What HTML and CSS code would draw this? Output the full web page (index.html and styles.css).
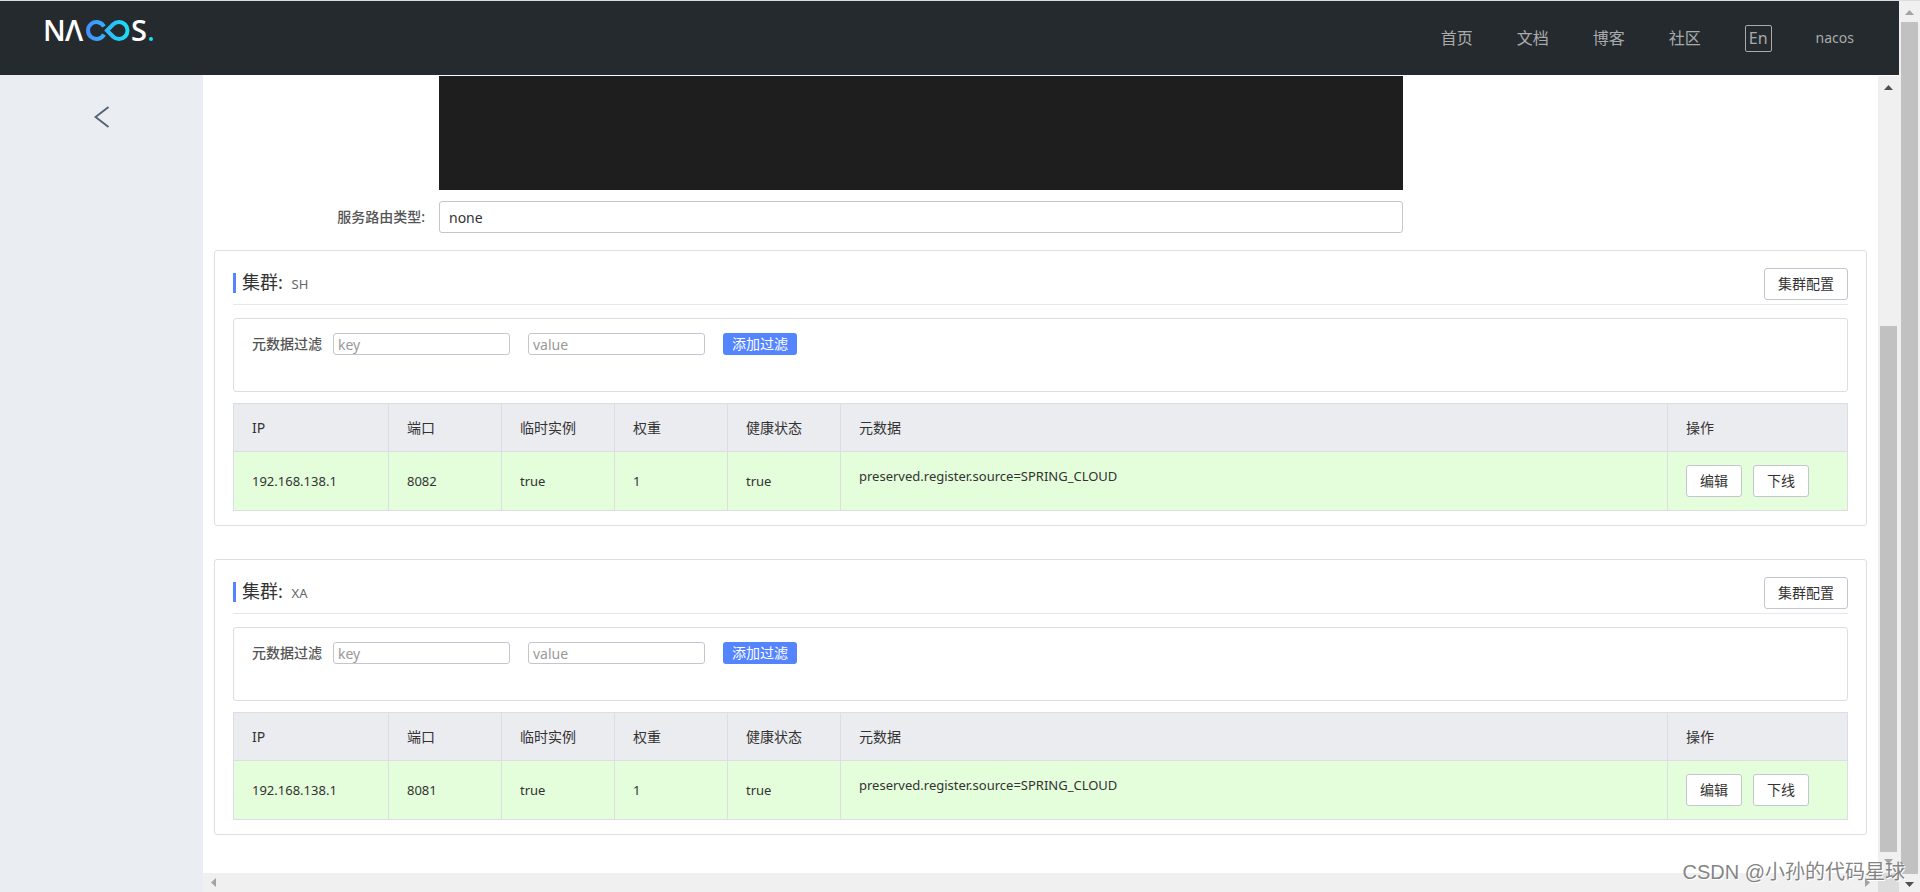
FILE: index.html
```html
<!DOCTYPE html>
<html lang="zh-CN">
<head>
<meta charset="utf-8">
<title>Nacos</title>
<link rel="stylesheet" href="styles.css">
</head>
<body>
<div class="window">
  <div class="app">
    <header class="header">
      <a class="logo" href="#" aria-label="Nacos">
        <svg width="110" height="24" viewBox="0 0 110 24">
          <defs>
            <linearGradient id="loop" gradientUnits="userSpaceOnUse" x1="40" y1="0" x2="86" y2="0">
              <stop offset="0" stop-color="#468cff"/>
              <stop offset="1" stop-color="#17e4f5"/>
            </linearGradient>
          </defs>
          <text class="logo-letter" x="-2" y="22">N</text>
          <text class="logo-letter" x="20" y="22">Λ</text>
          <g fill="none" stroke="url(#loop)" stroke-width="4">
            <path d="M59 7.500A8.500 8.500 0 1 0 59 15.500"/>
            <path d="M62 11.500L68 5.500A8.500 8.500 0 1 1 68 17.500Z"/>
          </g>
          <text class="logo-letter" x="86" y="22">S</text>
          <circle cx="106" cy="20" r="2" fill="#17e4f5"/>
        </svg>
      </a>
      <nav class="nav">
        <a href="#">首页</a>
        <a href="#">文档</a>
        <a href="#">博客</a>
        <a href="#">社区</a>
        <button class="lang" type="button">En</button>
        <a class="user" href="#">nacos</a>
      </nav>
    </header>
    <div class="body">
      <aside class="side">
        <button class="back" type="button" aria-label="返回">
          <svg width="16" height="22" viewBox="0 0 16 22"><path d="M14.500 1L1.500 11l13 10" fill="none" stroke="#546478" stroke-width="2"/></svg>
        </button>
      </aside>
      <div class="pane">
        <main class="content">
          <div class="form">
            <div class="editor"></div>
            <label class="form-label" for="selector">服务路由类型:</label>
            <input class="field" id="selector" type="text" value="none" readonly>
          </div>

          <section class="card">
            <div class="card-head">
              <h2 class="card-title">集群: <span class="card-name">SH</span></h2>
              <button class="btn" type="button">集群配置</button>
            </div>
            <form class="filter">
              <label class="filter-label" for="key-sh">元数据过滤</label>
              <input class="small-field" id="key-sh" type="text" placeholder="key">
              <input class="small-field" type="text" placeholder="value" aria-label="value">
              <button class="add" type="button">添加过滤</button>
            </form>
            <table class="table">
              <colgroup><col class="c-ip"><col class="c-short"><col class="c-short"><col class="c-short"><col class="c-short"><col><col class="c-ops"></colgroup>
              <thead><tr><th>IP</th><th>端口</th><th>临时实例</th><th>权重</th><th>健康状态</th><th>元数据</th><th>操作</th></tr></thead>
              <tbody><tr><td>192.168.138.1</td><td>8082</td><td>true</td><td>1</td><td>true</td><td><p class="meta">preserved.register.source=SPRING_CLOUD</p></td><td><div class="ops"><button class="btn" type="button">编辑</button><button class="btn" type="button">下线</button></div></td></tr></tbody>
            </table>
          </section>

          <section class="card">
            <div class="card-head">
              <h2 class="card-title">集群: <span class="card-name">XA</span></h2>
              <button class="btn" type="button">集群配置</button>
            </div>
            <form class="filter">
              <label class="filter-label" for="key-xa">元数据过滤</label>
              <input class="small-field" id="key-xa" type="text" placeholder="key">
              <input class="small-field" type="text" placeholder="value" aria-label="value">
              <button class="add" type="button">添加过滤</button>
            </form>
            <table class="table">
              <colgroup><col class="c-ip"><col class="c-short"><col class="c-short"><col class="c-short"><col class="c-short"><col><col class="c-ops"></colgroup>
              <thead><tr><th>IP</th><th>端口</th><th>临时实例</th><th>权重</th><th>健康状态</th><th>元数据</th><th>操作</th></tr></thead>
              <tbody><tr><td>192.168.138.1</td><td>8081</td><td>true</td><td>1</td><td>true</td><td><p class="meta">preserved.register.source=SPRING_CLOUD</p></td><td><div class="ops"><button class="btn" type="button">编辑</button><button class="btn" type="button">下线</button></div></td></tr></tbody>
            </table>
          </section>
        </main>
        <div class="vbar inner">
          <svg class="arrow dark" viewBox="0 0 9 5"><path d="M0 5L4.500 0L9 5z"/></svg>
          <div class="thumb"></div>
          <svg class="arrow" viewBox="0 0 9 5"><path d="M0 0L4.500 5L9 0z"/></svg>
        </div>
        <div class="hbar">
          <svg class="arrow-side" viewBox="0 0 5 9"><path d="M5 0L0 4.500L5 9z"/></svg>
          <svg class="arrow-side" viewBox="0 0 5 9"><path d="M0 0L5 4.500L0 9z"/></svg>
        </div>
        <div class="corner"></div>
      </div>
    </div>
  </div>
  <div class="vbar outer">
    <svg class="arrow" viewBox="0 0 9 5"><path d="M0 5L4.500 0L9 5z"/></svg>
    <div class="thumb"></div>
    <svg class="arrow dark" viewBox="0 0 9 5"><path d="M0 0L4.500 5L9 0z"/></svg>
  </div>
  <div class="watermark">CSDN @小孙的代码星球</div>
</div>
</body>
</html>
```
FILE: styles.css
```css
* { box-sizing: border-box; }

body {
  margin: 0;
  background: #fff;
  color: #333;
  font: 14px/20px "Noto Sans", "Noto Sans CJK SC", sans-serif;
}

button, input { font: inherit; margin: 0; }
a { color: inherit; text-decoration: none; }
svg { display: block; }

.window {
  position: relative;
  display: flex;
  height: 100vh;
  border-top: 1px solid #d9dddd;
}

.app { flex: 1; min-width: 0; display: flex; flex-direction: column; }

.header {
  flex: none;
  display: flex;
  align-items: center;
  justify-content: space-between;
  height: 74px;
  padding: 0 45px;
  background: #252a2f;
}

.logo { padding-bottom: 14px; }
.logo-letter { fill: #fff; font: 600 29px "Open Sans", sans-serif; }

.nav { display: flex; align-items: center; gap: 44px; color: #a8aaac; font-size: 16px; }
.lang {
  height: 27px;
  padding: 0 3px;
  border: 1px solid #a8aaac;
  border-radius: 2px;
  background: none;
  color: inherit;
  line-height: 22px;
}
.user { font-size: 14px; }

.body { flex: 1; min-height: 0; display: flex; }
.side { flex: none; width: 203px; padding-top: 31px; background: #eaedf1; }
.back { display: block; margin: 0 auto; padding: 0; border: 0; background: none; }

.pane {
  flex: 1;
  min-width: 0;
  display: grid;
  grid-template: minmax(0, 1fr) 19px / minmax(0, 1fr) 21px;
}

.content { padding: 1px 11px 0; overflow: hidden; }

.form {
  display: grid;
  grid-template-columns: 225px minmax(0, 964px);
  row-gap: 11px;
  align-items: center;
}
.editor { grid-column: 2; height: 114px; background: #1e1e1e; }
.form-label { padding-right: 14px; text-align: right; font-weight: 500; color: #555; }
.field {
  height: 32px;
  width: 100%;
  padding: 0 9px;
  border: 1px solid #c4c6cf;
  border-radius: 3px;
  color: #333;
}

.card {
  margin-top: 17px;
  padding: 17px 18px 14px;
  border: 1px solid #dcdee3;
  border-radius: 3px;
}
.card + .card { margin-top: 33px; }

.card-head {
  display: flex;
  justify-content: space-between;
  align-items: flex-start;
  padding-bottom: 4px;
  border-bottom: 1px solid #e6e7eb;
}
.card-title {
  margin: 5px 0 0;
  padding-left: 6px;
  border-left: 3px solid #5584ff;
  font-size: 18px;
  font-weight: 400;
  line-height: 18px;
}
.card-name { margin-left: 4px; font-size: 13px; color: #666; }

.btn {
  height: 32px;
  padding: 0 13px;
  border: 1px solid #c4c6cf;
  border-radius: 3px;
  background: #fff;
  color: #333;
}

.filter {
  display: flex;
  align-items: flex-start;
  height: 74px;
  margin: 13px 0 11px;
  padding: 14px 18px;
  border: 1px solid #dcdee3;
  border-radius: 3px;
}
.filter-label { margin: 1px 11px 0 0; font-weight: 500; color: #555; }
.small-field {
  width: 177px;
  height: 22px;
  margin-right: 18px;
  padding: 0 4px;
  border: 1px solid #c4c6cf;
  border-radius: 3px;
}
.small-field::placeholder { color: #999; }
.add {
  height: 22px;
  padding: 0 9px;
  border: 0;
  border-radius: 3px;
  background: #5584ff;
  color: #fff;
}

.table { width: 100%; table-layout: fixed; border-collapse: collapse; }
.c-ip { width: 155px; }
.c-short { width: 113px; }
.c-ops { width: 180px; }
.table th, .table td {
  padding: 0 18px;
  border: 1px solid #dcdee3;
  text-align: left;
  font-weight: 400;
}
.table th { height: 48px; background: #ebecf0; }
.table td { height: 59px; background: #e4fdda; font-size: 13px; }
.table .btn { font-size: 14px; }
.meta { margin: 0 0 10px; }
.ops { display: flex; gap: 11px; }

.vbar {
  display: flex;
  flex-direction: column;
  align-items: center;
  justify-content: space-between;
  background: #f0f0f0;
}
.inner { margin-top: 1px; padding: 9px 0; }
.outer { flex: none; width: 21px; padding: 9px 0 5px; }
.thumb { width: 17px; background: #c1c1c1; }
.inner .thumb { height: 526px; margin-top: auto; margin-bottom: 7px; }
.outer .thumb { flex: 1; margin: 7px 0 8px; }
.arrow { flex: none; width: 9px; height: 5px; fill: #a3a3a3; }
.dark { fill: #505050; }
.hbar {
  display: flex;
  align-items: center;
  justify-content: space-between;
  padding: 0 8px;
  background: #f0f0f0;
}
.arrow-side { width: 5px; height: 9px; fill: #a3a3a3; }
.corner { background: #dcdcdc; }

.watermark {
  position: absolute;
  right: 15px;
  bottom: 6px;
  color: rgba(110, 110, 110, .85);
  font: 20px/28px "Liberation Sans", "Noto Sans CJK SC", sans-serif;
  text-shadow: 1px 1px 0 #fff;
}
```
